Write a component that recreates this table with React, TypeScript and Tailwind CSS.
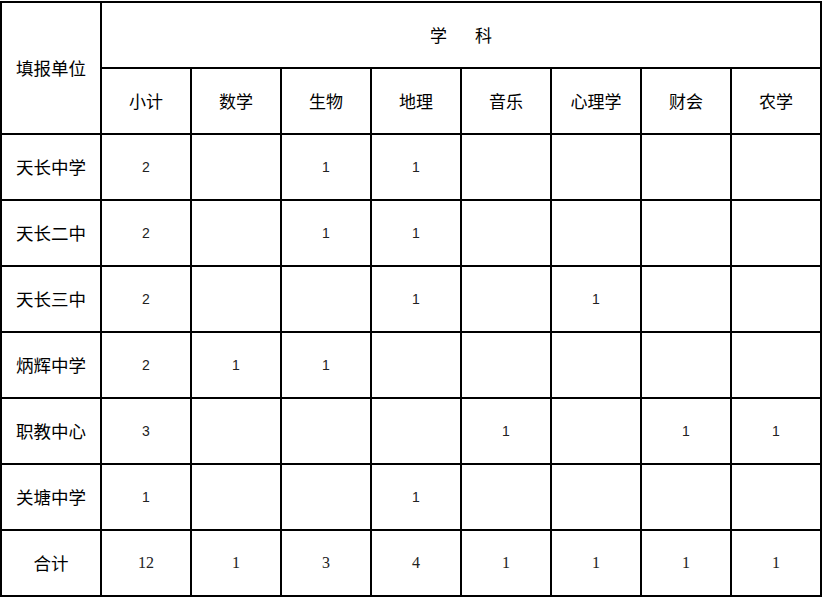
import React from 'react';

const subjects = ['小计', '数学', '生物', '地理', '音乐', '心理学', '财会', '农学'];

const rows: { name: string; cells: string[] }[] = [
  { name: '天长中学', cells: ['2', '', '1', '1', '', '', '', ''] },
  { name: '天长二中', cells: ['2', '', '1', '1', '', '', '', ''] },
  { name: '天长三中', cells: ['2', '', '', '1', '', '1', '', ''] },
  { name: '炳辉中学', cells: ['2', '1', '1', '', '', '', '', ''] },
  { name: '职教中心', cells: ['3', '', '', '', '1', '', '1', '1'] },
  { name: '关塘中学', cells: ['1', '', '', '1', '', '', '', ''] },
];

const totals = ['12', '1', '3', '4', '1', '1', '1', '1'];

const cjk = "font-['Noto_Sans_CJK_SC',_'Noto_Sans',_sans-serif]";

export default function App() {
  return (
    <div className="w-[824px] h-[597px] bg-white overflow-hidden pt-[1px]">
      <div className={`grid grid-cols-[98px_repeat(8,88px)] grid-rows-[repeat(9,64px)] gap-[2px] bg-black p-[2px] w-[822px] text-black ${cjk}`}>
        {/* header */}
        <div className="row-span-2 bg-white flex items-center justify-center text-[17.5px]">填报单位</div>
        <div className="col-span-8 bg-white flex items-center justify-center text-[17px] gap-[28px]">
          <span>学</span>
          <span>科</span>
        </div>
        {subjects.map((s) => (
          <div key={s} className="bg-white flex items-center justify-center text-[17px]">
            {s}
          </div>
        ))}

        {/* body */}
        {rows.map((r) => (
          <React.Fragment key={r.name}>
            <div className="bg-white flex items-center justify-center text-[17.5px]">{r.name}</div>
            {r.cells.map((c, i) => (
              <div key={i} className="bg-white flex items-center justify-center text-[14px] font-['Liberation_Sans',_sans-serif] text-[#222]">
                {c}
              </div>
            ))}
          </React.Fragment>
        ))}

        {/* totals */}
        <div className="bg-white flex items-center justify-center text-[17.5px]">合计</div>
        {totals.map((t, i) => (
          <div key={i} className="bg-white flex items-center justify-center text-[16px] font-['Liberation_Serif',_serif] text-[#222]">
            {t}
          </div>
        ))}
      </div>
    </div>
  );
}
